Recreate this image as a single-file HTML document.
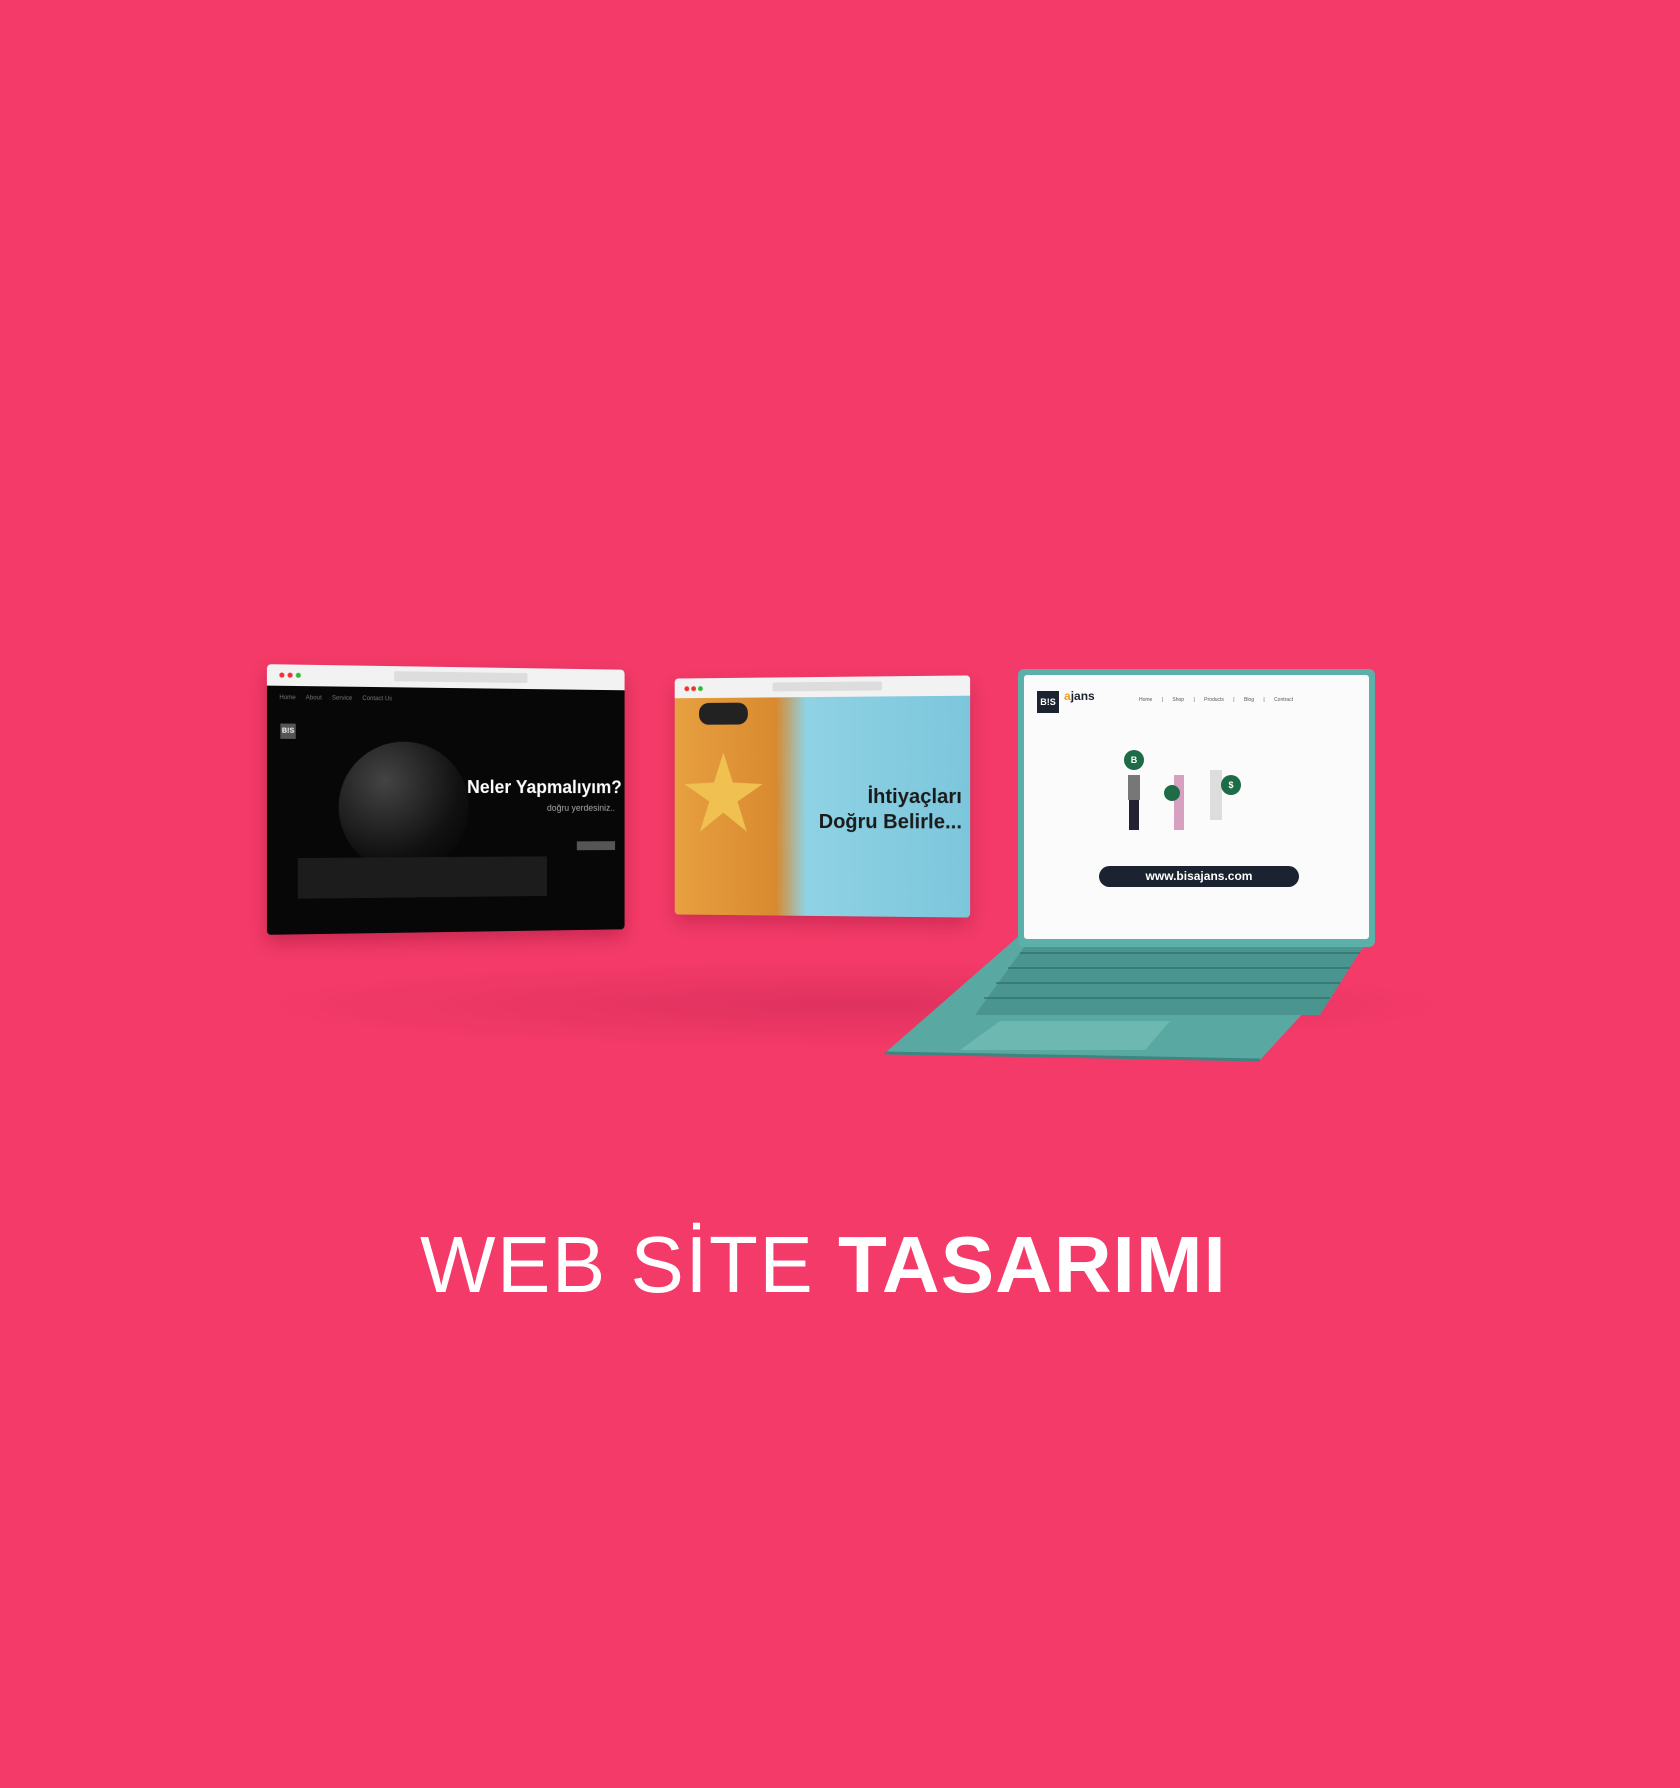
<!DOCTYPE html>
<html><head><meta charset="utf-8"><style>
html,body{margin:0;padding:0}
body{width:1680px;height:1788px;background:#f43a68;position:relative;overflow:hidden;font-family:"Liberation Sans",sans-serif}
.abs{position:absolute}
.bar{background:#f2f2f2;}
.dot{position:absolute;width:5px;height:5px;border-radius:50%;top:8px}
</style></head><body>
<div class="abs" style="left:230px;top:960px;width:1250px;height:90px;background:radial-gradient(ellipse at center,rgba(150,20,60,0.22),rgba(244,58,104,0) 70%)"></div>

<div class="abs" style="left:269px;top:667px;width:361px;height:265px;background:#070708;border-radius:4px;transform:perspective(1200px) rotateY(8deg);overflow:hidden;box-shadow:0 8px 18px rgba(120,10,40,.35)">
  <div class="bar" style="height:21px;position:relative">
    <div class="dot" style="left:12px;background:#e33"></div><div class="dot" style="left:20px;background:#e33"></div><div class="dot" style="left:28px;background:#3b3"></div>
    <div class="abs" style="left:125px;top:5px;width:135px;height:10px;background:#ddd;border-radius:2px"></div>
  </div>
  <div class="abs" style="left:12px;top:30px;font-size:6px;color:#777">Home &nbsp;&nbsp;&nbsp;&nbsp; About &nbsp;&nbsp;&nbsp;&nbsp; Service &nbsp;&nbsp;&nbsp;&nbsp; Contact Us</div>
  <div class="abs" style="left:13px;top:58px;width:15px;height:15px;background:#555;font-size:7px;color:#fff;font-weight:bold;text-align:center;line-height:15px">B!S</div>
  <div class="abs" style="left:70px;top:75px;width:130px;height:130px;border-radius:50%;background:radial-gradient(circle at 35% 30%,#444,#111 60%,#000)"></div>
  <div class="abs" style="left:30px;top:190px;width:250px;height:40px;background:#1c1c1c"></div>
  <div class="abs" style="right:3px;top:110px;font-size:18px;font-weight:bold;color:#fff">Neler Yapmalıyım?</div>
  <div class="abs" style="right:10px;top:136px;font-size:9px;color:#aaa">doğru yerdesiniz..</div>
  <div class="abs" style="right:10px;top:175px;width:40px;height:9px;background:#555"></div>
</div>

<div class="abs" style="left:672px;top:677px;width:297px;height:239px;border-radius:4px;overflow:hidden;transform:perspective(1200px) rotateY(-6deg);box-shadow:0 8px 18px rgba(120,10,40,.3);background:linear-gradient(90deg,#e8a040 0%,#d98a30 35%,#8fd2e4 45%,#7cc6dc 100%)">
  <div class="bar" style="height:20px;position:relative">
    <div class="dot" style="left:10px;background:#e33"></div><div class="dot" style="left:17px;background:#e33"></div><div class="dot" style="left:24px;background:#3b3"></div>
    <div class="abs" style="left:100px;top:5px;width:110px;height:9px;background:#ddd;border-radius:2px"></div>
  </div>
  <div class="abs" style="left:10px;top:75px;width:80px;height:80px;background:#f0c050;clip-path:polygon(50% 0,62% 38%,100% 40%,68% 62%,80% 100%,50% 76%,20% 100%,32% 62%,0 40%,38% 38%)"></div>
  <div class="abs" style="left:25px;top:25px;width:50px;height:22px;border-radius:10px;background:#222"></div>
  <div class="abs" style="right:8px;top:108px;font-size:20px;font-weight:bold;color:#1a1a1a;text-align:right;line-height:25px">İhtiyaçları<br>Doğru Belirle...</div>
</div>

<svg class="abs" style="left:880px;top:925px" width="500" height="140">
  <polygon points="140,10 495,10 380,135 5,128" fill="#5aa8a2"/>
  <polygon points="150,14 488,14 440,90 95,90" fill="#4a9590"/>
  <g stroke="#2e6e6a" stroke-width="1.2" fill="none">
    <line x1="140" y1="28" x2="480" y2="28"/><line x1="128" y1="43" x2="470" y2="43"/><line x1="116" y1="58" x2="460" y2="58"/><line x1="104" y1="73" x2="450" y2="73"/>
  </g>
  <polygon points="120,96 290,96 265,125 80,125" fill="#6db8b1"/>
  <line x1="5" y1="128" x2="380" y2="135" stroke="#3d8580" stroke-width="3"/>
</svg>
<div class="abs" style="left:1018px;top:669px;width:357px;height:278px;background:#5cb0aa;border-radius:6px"></div>
<div class="abs" style="left:1024px;top:675px;width:345px;height:264px;background:#fbfbfb;border-radius:3px;overflow:hidden">
  <div class="abs" style="left:13px;top:16px;width:22px;height:22px;background:#1b2230;color:#fff;font-size:9px;font-weight:bold;text-align:center;line-height:22px">B!S</div>
  <div class="abs" style="left:40px;top:14px;font-size:12px;font-weight:bold;color:#1b2230"><span style="color:#f0a020">a</span>jans</div>
  <div class="abs" style="left:115px;top:22px;font-size:5px;color:#555;word-spacing:8px">Home | Shop | Products | Blog | Contract</div>
  <div class="abs" style="left:100px;top:75px;width:20px;height:20px;border-radius:50%;background:#1d6b47;color:#fff;font-size:9px;font-weight:bold;text-align:center;line-height:20px">B</div>
  <div class="abs" style="left:104px;top:100px;width:12px;height:25px;background:#777"></div>
  <div class="abs" style="left:105px;top:125px;width:10px;height:30px;background:#223"></div>
  <div class="abs" style="left:150px;top:100px;width:10px;height:55px;background:#d8a0c0"></div>
  <div class="abs" style="left:140px;top:110px;width:16px;height:16px;border-radius:50%;background:#1d6b47"></div>
  <div class="abs" style="left:186px;top:95px;width:12px;height:50px;background:#ddd"></div>
  <div class="abs" style="left:197px;top:100px;width:20px;height:20px;border-radius:50%;background:#1d6b47;color:#fff;font-size:9px;font-weight:bold;text-align:center;line-height:20px">$</div>
  <div class="abs" style="left:75px;top:191px;width:200px;height:21px;border-radius:11px;background:#1b2230;color:#fff;font-size:12px;font-weight:bold;text-align:center;line-height:21px">www.bisajans.com</div>
</div>

<div class="abs" style="left:420px;top:1222px;font-size:80px;line-height:86px;color:#fff;white-space:nowrap;letter-spacing:1.5px">WEB SİTE <b style="letter-spacing:1px">TASARIMI</b></div>
</body></html>
